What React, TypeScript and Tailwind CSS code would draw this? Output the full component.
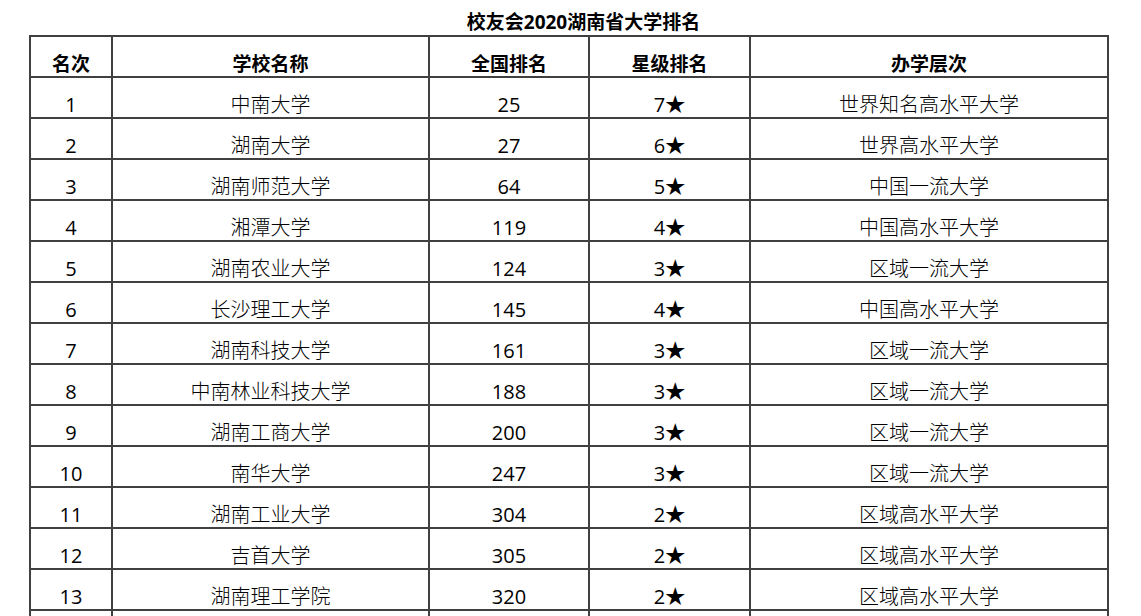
const headers = ["名次", "学校名称", "全国排名", "星级排名", "办学层次"];

const rows: string[][] = [
  ["1", "中南大学", "25", "7★", "世界知名高水平大学"],
  ["2", "湖南大学", "27", "6★", "世界高水平大学"],
  ["3", "湖南师范大学", "64", "5★", "中国一流大学"],
  ["4", "湘潭大学", "119", "4★", "中国高水平大学"],
  ["5", "湖南农业大学", "124", "3★", "区域一流大学"],
  ["6", "长沙理工大学", "145", "4★", "中国高水平大学"],
  ["7", "湖南科技大学", "161", "3★", "区域一流大学"],
  ["8", "中南林业科技大学", "188", "3★", "区域一流大学"],
  ["9", "湖南工商大学", "200", "3★", "区域一流大学"],
  ["10", "南华大学", "247", "3★", "区域一流大学"],
  ["11", "湖南工业大学", "304", "2★", "区域高水平大学"],
  ["12", "吉首大学", "305", "2★", "区域高水平大学"],
  ["13", "湖南理工学院", "320", "2★", "区域高水平大学"],
  ["", "", "", "", ""],
];

const font = { fontFamily: '"Open Sans", "Noto Sans CJK SC", sans-serif' };

// numbers and star ratings sit in columns 0, 2 and 3
const numericCols = [0, 2, 3];

export default function App() {
  return (
    <div className="h-[616px] w-[1141px] overflow-hidden bg-white text-black" style={font}>
      <div className="flex h-[35px] items-end justify-center pl-[26px] pb-[1px]">
        <h1 className="text-[19px] leading-[24px] font-bold">校友会2020湖南省大学排名</h1>
      </div>

      <div className="ml-[29px] grid w-[1080px] grid-cols-[80px_315px_158px_159px_356px] gap-[2px] bg-[#404040] p-[2px]">
        {headers.map((h) => (
          <div
            key={h}
            className="flex h-[39px] items-end justify-center bg-white text-[19px] leading-[24px] font-bold"
          >
            {h}
          </div>
        ))}
        {rows.map((row, i) =>
          row.map((cell, j) => (
            <div
              key={`${i}-${j}`}
              className={
                numericCols.includes(j)
                  ? "flex h-[39px] items-end justify-center bg-white text-[20px] leading-[24px] font-normal"
                  : "flex h-[39px] items-end justify-center bg-white text-[20px] leading-[24px] font-light"
              }
            >
              {cell}
            </div>
          ))
        )}
      </div>
    </div>
  );
}
